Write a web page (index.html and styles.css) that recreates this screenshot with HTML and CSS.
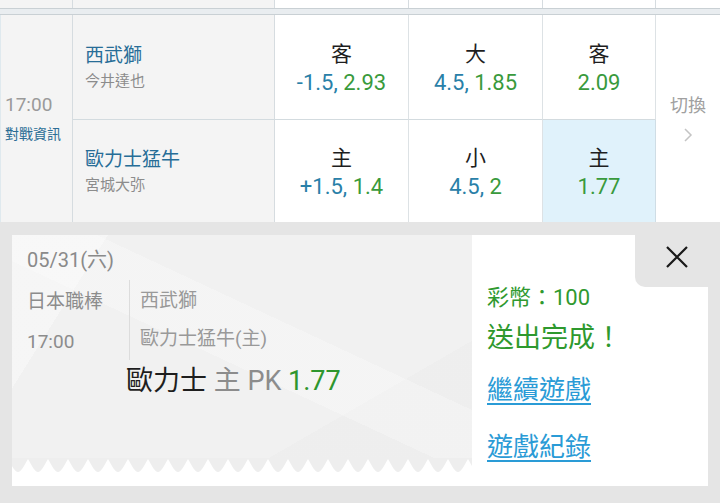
FILE: index.html
```html
<!DOCTYPE html>
<html lang="zh-Hant">
<head>
    <meta charset="UTF-8">
    <meta name="viewport" content="width=device-width, initial-scale=1.0">
    <title>投注完成</title>
    <link rel="stylesheet" href="styles.css">
</head>
<body>
    <div class="board">
        <div class="strip">
            <div class="strip-cell shade"></div>
            <div class="strip-cell shade"></div>
            <div class="strip-cell"></div>
            <div class="strip-cell"></div>
            <div class="strip-cell"></div>
            <div class="strip-cell last"></div>
        </div>
        <div class="band"></div>

        <div class="match">
            <div class="time-cell">
                <div class="time">17:00</div>
                <div class="info-link">對戰資訊</div>
            </div>

            <div class="team-cell top">
                <div class="team-name">西武獅</div>
                <div class="pitcher">今井達也</div>
            </div>
            <div class="odds-cell top">
                <div class="odds-label">客</div>
                <div class="odds-value"><span class="line">-1.5,</span> <span class="price">2.93</span></div>
            </div>
            <div class="odds-cell top">
                <div class="odds-label">大</div>
                <div class="odds-value"><span class="line">4.5,</span> <span class="price">1.85</span></div>
            </div>
            <div class="odds-cell top">
                <div class="odds-label">客</div>
                <div class="odds-value"><span class="price">2.09</span></div>
            </div>

            <div class="switch-cell">
                <div class="switch-text">切換</div>
                <svg class="chevron" width="10" height="18" viewBox="0 0 10 18">
                    <polyline points="2,3 8,9 2,15" fill="none" stroke="#c4c4c4" stroke-width="1.5"/>
                </svg>
            </div>

            <div class="team-cell">
                <div class="team-name">歐力士猛牛</div>
                <div class="pitcher">宮城大弥</div>
            </div>
            <div class="odds-cell">
                <div class="odds-label">主</div>
                <div class="odds-value"><span class="line">+1.5,</span> <span class="price">1.4</span></div>
            </div>
            <div class="odds-cell">
                <div class="odds-label">小</div>
                <div class="odds-value"><span class="line">4.5,</span> <span class="price">2</span></div>
            </div>
            <div class="odds-cell picked">
                <div class="odds-label">主</div>
                <div class="odds-value"><span class="price">1.77</span></div>
            </div>
        </div>
    </div>

    <div class="overlay">
        <div class="popup">
            <div class="ticket">
                <div class="ticket-body">
                    <div class="ticket-date">05/31(六)</div>
                    <div class="game">
                        <div class="league">
                            <div>日本職棒</div>
                            <div>17:00</div>
                        </div>
                        <div class="teams">
                            <div>西武獅</div>
                            <div>歐力士猛牛(主)</div>
                        </div>
                    </div>
                    <div class="pick">
                        <span class="pick-team">歐力士</span>
                        <span class="pick-type">主 PK</span>
                        <span class="pick-odds">1.77</span>
                    </div>
                </div>
                <svg class="ticket-edge" width="460" height="14">
                    <defs>
                        <pattern id="zigzag" width="20" height="14" patternUnits="userSpaceOnUse" x="-4">
                            <path d="M0 0H20V1C16 8 13 14 10 14C7 14 4 8 0 1Z" fill="#eeeeee"/>
                        </pattern>
                    </defs>
                    <rect width="460" height="14" fill="url(#zigzag)"/>
                </svg>
                <div class="ticket-foot"></div>
            </div>

            <div class="result">
                <div class="close-row">
                    <button class="close-btn">
                        <svg width="24" height="24" viewBox="0 0 24 24">
                            <path d="M2 2L22 22M22 2L2 22" stroke="#1a1a1a" stroke-width="2.2" fill="none"/>
                        </svg>
                    </button>
                </div>
                <div class="coins">彩幣：100</div>
                <div class="done">送出完成！</div>
                <a class="result-link first" href="#">繼續遊戲</a>
                <a class="result-link" href="#">遊戲紀錄</a>
            </div>
        </div>
    </div>
</body>
</html>
```

FILE: styles.css
```css
* {
    box-sizing: border-box;
}

body {
    margin: 0;
    width: 720px;
    height: 503px;
    overflow: hidden;
    font-family: Roboto, "Noto Sans CJK TC", sans-serif;
    background-color: #e5e5e5;
}

/* 上方賽事表格 */
.board {
    background: #fff;
}

.strip {
    display: grid;
    grid-template-columns: 73px 202px 134px 134px 113px 64px;
    height: 9px;
    border-bottom: 1px solid #c9d0d4;
}

.strip-cell {
    border-right: 1px solid #d6dce0;
}

.strip-cell.shade {
    background: #f4f4f4;
}

.strip-cell.last {
    border-right: none;
}

.band {
    height: 6px;
    background: #e9edf0;
    border-bottom: 1px solid #c9d0d4;
}

.match {
    display: grid;
    grid-template-columns: 73px 202px 134px 134px 113px 64px;
    grid-template-rows: 105px 102px;
}

.time-cell {
    grid-row: span 2;
    background: #f4f4f4;
    border-right: 1px solid #d6dce0;
    border-left: 1px solid #dfe9ee;
    display: flex;
    flex-direction: column;
    justify-content: center;
    gap: 5px;
    padding-left: 4px;
}

.time {
    font-size: 19px;
    line-height: 26px;
    color: #9a9a9a;
}

.info-link {
    font-size: 14px;
    line-height: 22px;
    color: #2c6e96;
}

.team-cell {
    background: #f4f4f4;
    border-right: 1px solid #d6dce0;
    display: flex;
    flex-direction: column;
    justify-content: center;
    gap: 2px;
    padding: 2px 0 0 12px;
}

.team-cell.top,
.odds-cell.top {
    border-bottom: 1px solid #d3dbdf;
}

.team-name {
    font-size: 19px;
    line-height: 24px;
    color: #276d97;
}

.pitcher {
    font-size: 15px;
    line-height: 22px;
    color: #8c8c8c;
}

.odds-cell {
    border-right: 1px solid #dde2e5;
    display: flex;
    flex-direction: column;
    justify-content: center;
    align-items: center;
    gap: 2px;
    padding-top: 4px;
}

.odds-cell.picked {
    background: #e0f2fb;
    border-right-color: #cfdde5;
}

.odds-label {
    font-size: 21px;
    line-height: 26px;
    color: #1e1e1e;
}

.odds-value {
    font-size: 22px;
    line-height: 28px;
}

.odds-value .line {
    color: #2980a8;
}

.odds-value .price {
    color: #399a3c;
}

.switch-cell {
    grid-column: 6;
    grid-row: 1 / span 2;
    display: flex;
    flex-direction: column;
    align-items: center;
    justify-content: center;
    gap: 8px;
}

.switch-text {
    font-size: 18px;
    line-height: 24px;
    color: #a0a0a0;
}

/* 投注完成彈窗 */
.overlay {
    padding: 13px 12px 0;
}

.popup {
    display: flex;
    height: 251px;
    background: #fff;
}

.ticket {
    width: 460px;
    display: flex;
    flex-direction: column;
}

.ticket-body {
    flex: 1;
    padding: 12px 15px 0;
    background:
        linear-gradient(122deg, rgba(255, 255, 255, 0.35) 0 16%, transparent 16% 100%),
        linear-gradient(205deg, transparent 0 40%, rgba(255, 255, 255, 0.25) 40% 55%, transparent 55% 100%),
        linear-gradient(330deg, rgba(0, 0, 0, 0.012) 0 24%, transparent 24% 100%),
        #f1f1f1;
}

.ticket-date {
    font-size: 20px;
    line-height: 26px;
    color: #8a8a8a;
}

.game {
    display: flex;
    margin-top: 7px;
    color: #8c8c8c;
}

.league {
    width: 102px;
    padding-top: 4px;
    display: flex;
    flex-direction: column;
    gap: 4px;
    font-size: 19px;
    line-height: 36px;
}

.teams {
    border-left: 1px solid #dcdcdc;
    padding: 3px 0 0 10px;
    display: flex;
    flex-direction: column;
    gap: 2px;
    font-size: 19px;
    line-height: 36px;
    color: #999;
}

.pick {
    margin: 5px 0 0 99px;
    font-size: 27px;
    line-height: 32px;
}

.pick-team {
    color: #1e1e1e;
}

.pick-type {
    color: #8c8c8c;
}

.pick-odds {
    color: #2e962e;
}

.ticket-edge {
    display: block;
    background: #fff;
}

.ticket-foot {
    height: 14px;
    background: #fff;
}

.result {
    flex: 1;
    display: flex;
    flex-direction: column;
    align-items: flex-start;
    padding-left: 15px;
}

.close-row {
    align-self: stretch;
    display: flex;
    justify-content: flex-end;
}

.close-btn {
    width: 73px;
    height: 52px;
    border: none;
    background: #e5e5e5;
    border-bottom-left-radius: 10px;
    display: flex;
    align-items: center;
    justify-content: center;
    padding: 0 0 8px 11px;
    cursor: pointer;
}

.coins {
    margin-top: 1px;
    font-size: 22px;
    line-height: 20px;
    color: #2f992f;
}

.done {
    margin-top: 15px;
    font-size: 27px;
    line-height: 30px;
    color: #2e992e;
}

.result-link {
    margin-top: 27px;
    font-size: 26px;
    line-height: 30px;
    color: #2a9bd6;
    text-decoration: underline;
    text-underline-offset: 4px;
}

.result-link.first {
    margin-top: 22px;
}
```
